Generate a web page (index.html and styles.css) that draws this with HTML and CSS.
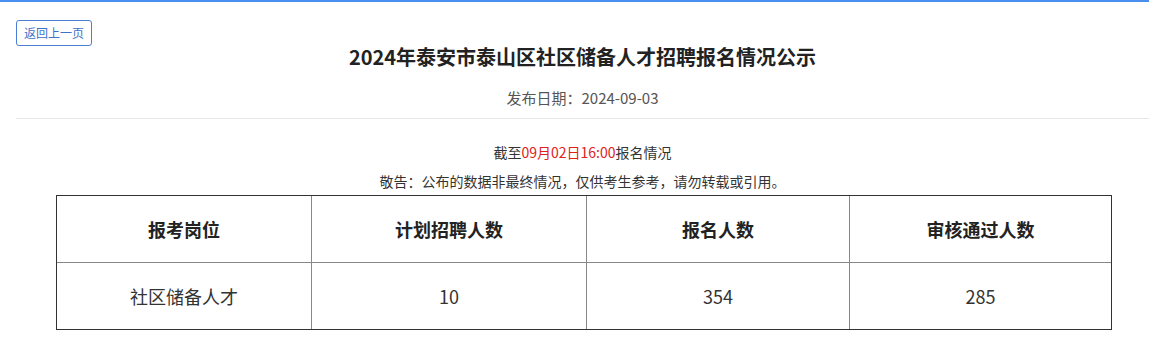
FILE: index.html
```html
<!DOCTYPE html>
<html lang="zh-CN">
<head>
<meta charset="utf-8">
<title>2024年泰安市泰山区社区储备人才招聘报名情况公示</title>
<link rel="stylesheet" href="styles.css">
</head>
<body>
<div class="topbar"></div>
<div class="page">
  <a class="back" href="#">返回上一页</a>
  <h1 class="title">2024年泰安市泰山区社区储备人才招聘报名情况公示</h1>
  <p class="pubdate">发布日期：2024-09-03</p>
  <hr class="divider">
  <p class="notice">截至<span class="hl">09月02日16:00</span>报名情况</p>
  <p class="notice notice-2">敬告：公布的数据非最终情况，仅供考生参考，请勿转载或引用。</p>
  <table class="stats">
    <colgroup>
      <col class="c1"><col class="c2"><col class="c3"><col class="c4">
    </colgroup>
    <thead>
      <tr><th>报考岗位</th><th>计划招聘人数</th><th>报名人数</th><th>审核通过人数</th></tr>
    </thead>
    <tbody>
      <tr><td>社区储备人才</td><td>10</td><td>354</td><td>285</td></tr>
    </tbody>
  </table>
</div>
</body>
</html>
```

FILE: styles.css
```css
html, body {
  margin: 0;
  padding: 0;
  background: #fff;
}

body {
  font-family: "Noto Sans CJK SC", "Noto Sans", sans-serif;
  color: #333;
}

.topbar {
  height: 2px;
  background: #4a8ef0;
}

.page {
  padding-left: 16px;
}

.back {
  display: inline-block;
  box-sizing: border-box;
  margin-top: 18px;
  height: 26px;
  width: 76px;
  border: 1px solid #4a7fd4;
  border-radius: 3px;
  font-size: 12px;
  line-height: 24px;
  text-align: center;
  color: #3d72c9;
  text-decoration: none;
  vertical-align: top;
}

.title {
  margin: 0;
  font-size: 20px;
  line-height: 22px;
  font-weight: bold;
  color: #222;
  text-align: center;
}

.pubdate {
  margin: 20px 0 0;
  font-size: 15px;
  line-height: 20px;
  color: #555;
  text-align: center;
}

.divider {
  margin: 10px 0 0;
  border: 0;
  height: 1px;
  background: #e6e6e6;
}

.notice {
  margin: 23px 0 0;
  font-size: 14px;
  line-height: 20px;
  color: #333;
  text-align: center;
}

.notice-2 {
  margin-top: 9px;
}

.hl {
  color: #e0201b;
}

.stats {
  margin: 4px 0 0 40px;
  width: 1056px;
  table-layout: fixed;
  border-collapse: separate;
  border-spacing: 0;
  border: 1px solid #333;
}

.stats .c1 { width: 255px; }
.stats .c2 { width: 275px; }
.stats .c3 { width: 263px; }
.stats .c4 { width: 261px; }

.stats th,
.stats td {
  box-sizing: border-box;
  height: 67px;
  padding: 0;
  text-align: center;
  font-size: 18px;
  color: #333;
  border-right: 1px solid #888;
}

.stats th {
  font-weight: bold;
  color: #222;
  border-bottom: 1px solid #888;
}

.stats td {
  height: 66px;
}

.stats th:last-child,
.stats td:last-child {
  border-right: 0;
}
```
